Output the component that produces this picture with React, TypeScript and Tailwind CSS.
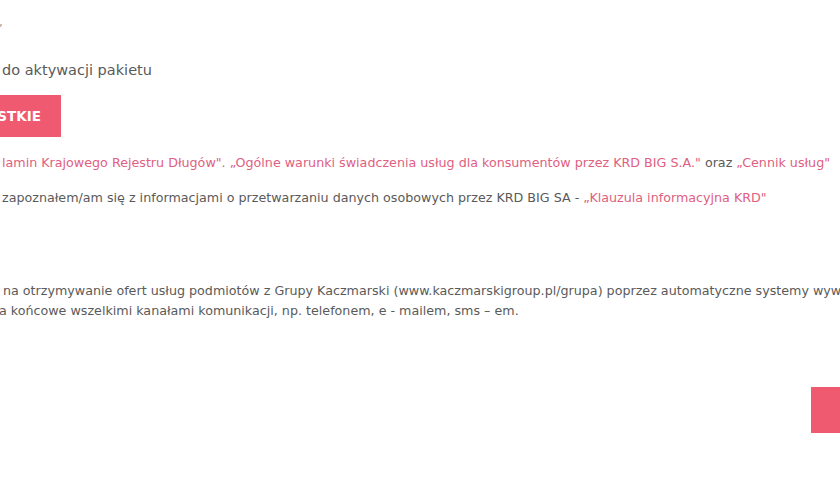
import React from "react";

export default function App() {
  const font = { fontFamily: '"DejaVu Sans", "Noto Sans", sans-serif' };
  return (
    <div
      className="w-[840px] h-[480px] bg-white overflow-hidden flex flex-col"
      style={font}
    >
      <div className="h-[14px]" />
      <div className="h-[16px] text-[12px] leading-[16px] text-[#9a9a9a] -ml-[1px]">,</div>
      <div className="h-[28px]" />
      <div className="text-[14.5px] leading-[24px] text-[#5a5a5a] pl-[2px] whitespace-nowrap">
        do aktywacji pakietu
      </div>
      <div className="h-[13px]" />
      <div className="flex">
        <div className="w-[61px] h-[42px] bg-[#ef5a70] text-white font-bold text-[13.5px] flex items-center justify-end pr-[20px] whitespace-nowrap overflow-hidden">
          STKIE
        </div>
      </div>
      <div className="h-[17px]" />
      <div className="text-[12.7px] leading-[18px] whitespace-nowrap pl-[2px] text-[#5a5a5a]">
        <span className="text-[#e0607f]">
          lamin Krajowego Rejestru Długów". „Ogólne warunki świadczenia usług dla konsumentów przez KRD BIG S.A."
        </span>{" "}
        oraz <span className="text-[#e0607f]">„Cennik usług"</span>
      </div>
      <div className="h-[17px]" />
      <div className="text-[12.7px] leading-[18px] whitespace-nowrap pl-[2px] text-[#5a5a5a]">
        zapoznałem/am się z informacjami o przetwarzaniu danych osobowych przez KRD BIG SA -{" "}
        <span className="text-[#e0607f]">„Klauzula informacyjna KRD"</span>
      </div>
      <div className="h-[74px]" />
      <div className="text-[12.7px] leading-[20px] whitespace-nowrap pl-[3px] text-[#5a5a5a]">
        na otrzymywanie ofert usług podmiotów z Grupy Kaczmarski (www.kaczmarskigroup.pl/grupa) poprzez automatyczne systemy wywołujące
      </div>
      <div className="text-[12.7px] leading-[20px] whitespace-nowrap -ml-[1px] text-[#5a5a5a]">
        a końcowe wszelkimi kanałami komunikacji, np. telefonem, e - mailem, sms – em.
      </div>
      <div className="h-[66px]" />
      <div className="flex justify-end">
        <div className="w-[60px] h-[46px] bg-[#ef5a70] -mr-[31px] shrink-0" />
      </div>
    </div>
  );
}
